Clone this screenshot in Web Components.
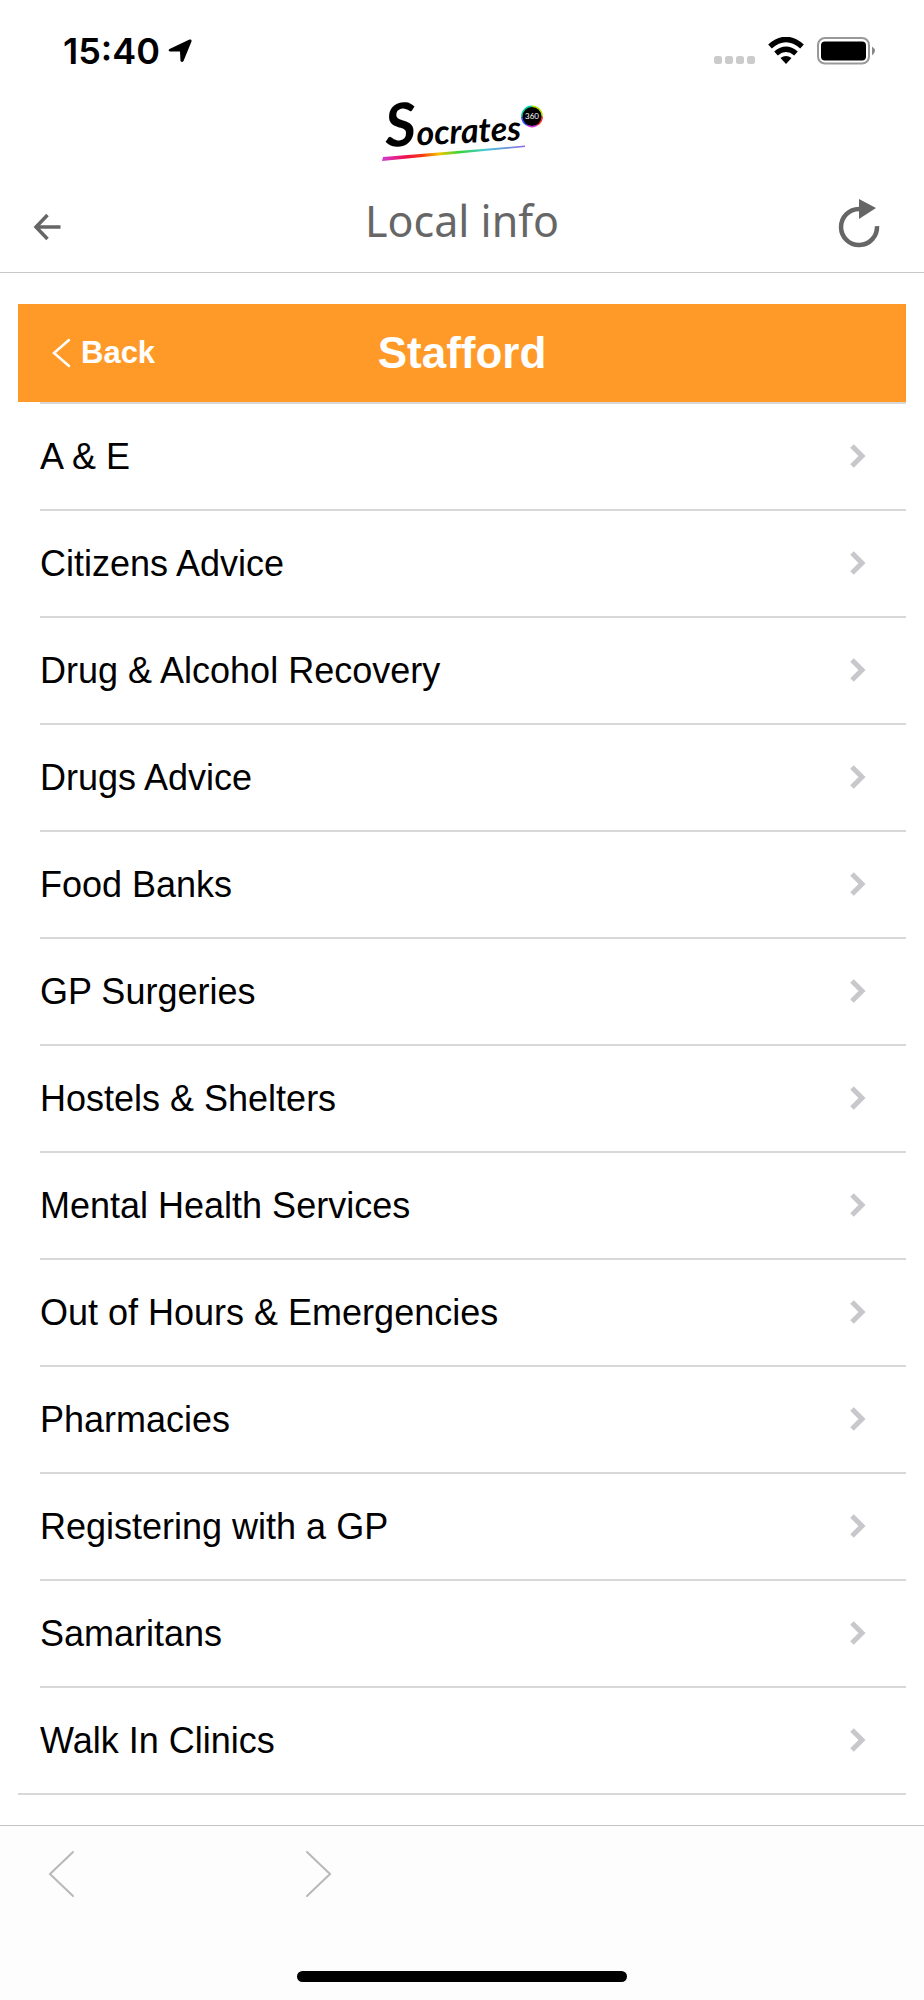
<!DOCTYPE html>
<html lang="en">
<head>
<meta charset="utf-8">
<meta name="viewport" content="width=device-width, initial-scale=1">
<title>Local info</title>
<style>
  body {
    margin: 0;
    min-height: 100vh;
    display: flex;
    flex-direction: column;
    background-color: #fff;
    color: #000;
    font-family: "Liberation Sans", Arial, sans-serif;
  }

  main {
    padding: 31px 18px 30px;
  }

  browser-toolbar {
    flex: 1;
  }
</style>
</head>
<body>
<status-bar>15:40</status-bar>
<app-header>Local info</app-header>
<main>
  <list-header>Stafford</list-header>
  <info-list></info-list>
</main>
<browser-toolbar></browser-toolbar>

<script>
class StatusBar extends HTMLElement {
  constructor() {
    super();
    this.shadowDOM = this.attachShadow({mode: 'open'});
  }

  connectedCallback() {
    this.render();
  }

  render() {
    this.shadowDOM.innerHTML = `
      <style>
      :host {
        display: flex;
        justify-content: space-between;
        align-items: center;
        height: 102px;
        padding: 0 48px 0 63px;
        font-family: Inter, sans-serif;
        font-size: 36px;
        font-weight: 600;
      }

      div {
        display: flex;
        align-items: center;
        gap: 8px;
      }

      svg {
        display: block;
      }
      </style>
      <div>
        <slot></slot>
        <svg width="24" height="24" viewBox="0 0 24 24">
          <path d="M1.500 10 L21.500 0.500 Q24 0 23.500 2.500 L15.500 22 Q14 24 12.500 22 L12 12.500 L2 12.500 Q-0.500 12 1.500 10Z"/>
        </svg>
      </div>
      <svg width="163" height="28" viewBox="0 0 163 28">
        <g fill="#cbcbcb">
          <rect x="1" y="19" width="8" height="8" rx="2.500"/>
          <rect x="12" y="19" width="8" height="8" rx="2.500"/>
          <rect x="23" y="19" width="8" height="8" rx="2.500"/>
          <rect x="34" y="19" width="8" height="8" rx="2.500"/>
        </g>
        <path d="M57 9.500 Q73 -4.500 89 9.500" fill="none" stroke="#000" stroke-width="5.500"/>
        <path d="M63 16.500 Q73 8 83 16.500" fill="none" stroke="#000" stroke-width="5.500"/>
        <path d="M67.500 21 Q73 17 78.500 21 L73 27Z"/>
        <rect x="105" y="1" width="51" height="25.500" rx="7" fill="none" stroke="#999" stroke-width="2"/>
        <rect x="108" y="4.500" width="45" height="19" rx="4"/>
        <path d="M159 9.500 Q165 13.500 159 18.500Z" fill="#888"/>
      </svg>
    `;
  }
}

class BrandLogo extends HTMLElement {
  constructor() {
    super();
    this.shadowDOM = this.attachShadow({mode: 'open'});
  }

  connectedCallback() {
    this.render();
  }

  render() {
    this.shadowDOM.innerHTML = `
      <style>
      :host {
        display: block;
      }

      svg {
        display: block;
        overflow: visible;
      }
      </style>
      <svg width="164" height="62" viewBox="0 0 164 62" role="img" aria-label="Socrates 360">
        <defs>
          <linearGradient id="swoosh">
            <stop offset="0" stop-color="#d13bd6"/>
            <stop offset="0.170" stop-color="#f0104a"/>
            <stop offset="0.280" stop-color="#f53a10"/>
            <stop offset="0.400" stop-color="#f5c400"/>
            <stop offset="0.540" stop-color="#35d435"/>
            <stop offset="0.720" stop-color="#49c8d8"/>
            <stop offset="1" stop-color="#8a6be0"/>
          </linearGradient>
        </defs>
        <text transform="rotate(-3 8 45)" x="6" y="45" font-family="Lato, sans-serif" font-style="italic" font-weight="700"><tspan font-size="60">S</tspan><tspan font-size="34">ocrates</tspan></text>
        <path d="M3 55 L145 43.500 L145 45 L2 59Z" fill="url(#swoosh)"/>
        <g fill="none" stroke-width="2">
          <path d="M152 4.500 A10 10 0 0 1 162 14.500" stroke="#b4e000"/>
          <path d="M162 14.500 A10 10 0 0 1 157 23" stroke="#ff3030"/>
          <path d="M157 23 A10 10 0 0 1 147 23" stroke="#d030e0"/>
          <path d="M147 23 A10 10 0 0 1 142 14.500" stroke="#3050ff"/>
          <path d="M142 14.500 A10 10 0 0 1 152 4.500" stroke="#00d0a0"/>
        </g>
        <circle cx="152" cy="14.500" r="9.500"/>
        <text x="152" y="17" fill="#fff" font-family="Lato, sans-serif" font-size="8" text-anchor="middle">360</text>
      </svg>
    `;
  }
}

class AppHeader extends HTMLElement {
  constructor() {
    super();
    this.shadowDOM = this.attachShadow({mode: 'open'});
  }

  connectedCallback() {
    this.render();
  }

  render() {
    this.shadowDOM.innerHTML = `
      <style>
      :host {
        display: block;
        border-bottom: 1px solid #c8c8c8;
        color: #666;
      }

      brand-logo {
        display: flex;
        justify-content: center;
        height: 80px;
      }

      nav {
        display: grid;
        grid-template-columns: 1fr auto 1fr;
        align-items: center;
        height: 90px;
        padding: 0 32px;
      }

      h1 {
        margin: 0;
        padding-bottom: 14px;
        font-family: "Noto Sans", sans-serif;
        font-size: 43px;
        font-weight: 400;
      }

      button {
        padding: 0;
        border: none;
        background: none;
        color: inherit;
        cursor: pointer;
      }

      #reloadButton {
        justify-self: end;
        padding-right: 12px;
      }

      #backButton {
        justify-self: start;
      }

      svg {
        display: block;
        fill: none;
        stroke: currentColor;
      }
      </style>
      <brand-logo></brand-logo>
      <nav>
        <button id="backButton" type="button" aria-label="Go back">
          <svg width="30" height="30" viewBox="0 0 30 30" stroke-width="3.500">
            <path d="M15.500 3 L4 15 L15.500 27 M4 15 H28.500"/>
          </svg>
        </button>
        <h1><slot></slot></h1>
        <button id="reloadButton" type="button" aria-label="Reload">
          <svg width="42" height="56" viewBox="0 0 42 56">
            <path d="M21 10 A18 18 0 1 0 39 27" stroke-width="4.500"/>
            <path d="M21 0 L38 9 L21 20Z" fill="currentColor" stroke="none"/>
          </svg>
        </button>
      </nav>
    `;
  }
}

class ListHeader extends HTMLElement {
  constructor() {
    super();
    this.shadowDOM = this.attachShadow({mode: 'open'});
  }

  connectedCallback() {
    this.render();
  }

  render() {
    this.shadowDOM.innerHTML = `
      <style>
      :host {
        display: grid;
        grid-template-columns: 1fr auto 1fr;
        align-items: center;
        height: 98px;
        padding: 0 34px;
        background-color: #ff9a29;
        color: #fff;
      }

      button {
        display: flex;
        align-items: center;
        gap: 10px;
        justify-self: start;
        padding: 0;
        border: none;
        background: none;
        color: inherit;
        font: bold 31px "Liberation Sans", Arial, sans-serif;
        cursor: pointer;
      }

      h2 {
        margin: 0;
        font-size: 44px;
      }
      </style>
      <button type="button">
        <svg width="19" height="30" viewBox="0 0 19 30" fill="none" stroke="currentColor" stroke-width="2.500" stroke-linecap="round">
          <path d="M17 2 L2 15 L17 28"/>
        </svg>
        Back
      </button>
      <h2><slot></slot></h2>
    `;
  }
}

class InfoRow extends HTMLElement {
  constructor() {
    super();
    this.shadowDOM = this.attachShadow({mode: 'open'});
  }

  connectedCallback() {
    this.render();
  }

  render() {
    this.shadowDOM.innerHTML = `
      <style>
      :host {
        display: block;
        margin-left: 22px;
        border-top: 2px solid #d8d8d8;
      }

      a {
        display: flex;
        justify-content: space-between;
        align-items: center;
        height: 105px;
        padding-right: 40px;
        color: #000;
        font-size: 36px;
        text-decoration: none;
      }
      </style>
      <a href="#">
        <span><slot></slot></span>
        <svg width="16" height="26" viewBox="0 0 16 26" fill="none" stroke="#c7c7cc" stroke-width="5">
          <path d="M2 2 L12 12 L2 22"/>
        </svg>
      </a>
    `;
  }
}

class InfoList extends HTMLElement {
  constructor() {
    super();
    this.shadowDOM = this.attachShadow({mode: 'open'});
    this.services = [
      'A &amp; E',
      'Citizens Advice',
      'Drug &amp; Alcohol Recovery',
      'Drugs Advice',
      'Food Banks',
      'GP Surgeries',
      'Hostels &amp; Shelters',
      'Mental Health Services',
      'Out of Hours &amp; Emergencies',
      'Pharmacies',
      'Registering with a GP',
      'Samaritans',
      'Walk In Clinics'
    ];
  }

  connectedCallback() {
    this.render();
  }

  render() {
    this.shadowDOM.innerHTML = `
      <style>
      :host {
        display: block;
        border-bottom: 2px solid #d8d8d8;
      }
      </style>
      ${this.services.map(service => `<info-row>${service}</info-row>`).join('')}
    `;
  }
}

class BrowserToolbar extends HTMLElement {
  constructor() {
    super();
    this.shadowDOM = this.attachShadow({mode: 'open'});
  }

  connectedCallback() {
    this.render();
  }

  render() {
    this.shadowDOM.innerHTML = `
      <style>
      :host {
        display: flex;
        flex-direction: column;
        justify-content: space-between;
        border-top: 1px solid #c4c4c4;
        background-color: #fdfdfd;
      }

      nav {
        display: flex;
        gap: 230px;
        padding: 24px 48px;
      }

      button {
        padding: 0;
        border: none;
        background: none;
        color: #b8b8b8;
      }

      svg {
        display: block;
        fill: none;
        stroke: currentColor;
        stroke-width: 2;
        stroke-linecap: round;
      }

      #homeIndicator {
        align-self: center;
        width: 330px;
        height: 11px;
        margin-bottom: 18px;
        border-radius: 6px;
        background-color: #000;
      }
      </style>
      <nav>
        <button type="button" aria-label="Previous page" disabled>
          <svg width="27" height="48" viewBox="0 0 27 48"><path d="M25 2 L2 24 L25 46"/></svg>
        </button>
        <button type="button" aria-label="Next page" disabled>
          <svg width="27" height="48" viewBox="0 0 27 48"><path d="M2 2 L25 24 L2 46"/></svg>
        </button>
      </nav>
      <div id="homeIndicator"></div>
    `;
  }
}

customElements.define('brand-logo', BrandLogo);
customElements.define('status-bar', StatusBar);
customElements.define('app-header', AppHeader);
customElements.define('list-header', ListHeader);
customElements.define('info-row', InfoRow);
customElements.define('info-list', InfoList);
customElements.define('browser-toolbar', BrowserToolbar);
</script>
</body>
</html>
